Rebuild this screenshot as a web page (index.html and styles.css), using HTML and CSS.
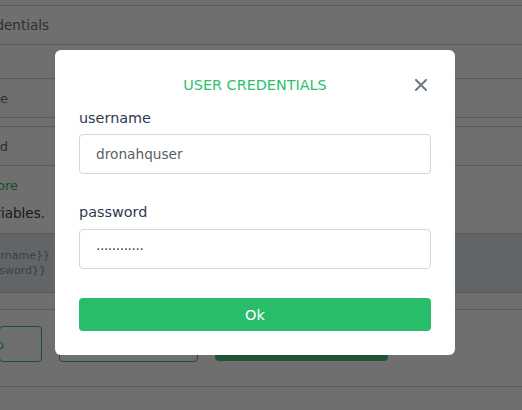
FILE: index.html
```html
<!DOCTYPE html>
<html>
<head>
<meta charset="utf-8">
<link rel="stylesheet" href="styles.css">
</head>
<body>
<div class="page">
  <div class="row row-top"></div>
  <div class="row row-title"><div class="clip clip-title"><span>User Credentials</span></div></div>
  <div class="row row-tabs"></div>
  <div class="row row-field"><div class="clip clip-user"><span>Username</span></div></div>
  <div class="row row-thin"></div>
  <div class="row row-field"><div class="clip clip-pass"><span>Password</span></div></div>
  <div class="info">
    <div class="clip learn"><span>Learn more</span></div>
    <div class="clip vars"><span>Use them as variables.</span></div>
  </div>
  <div class="code">
    <div class="clip clip-code1"><span>{{username}}</span></div>
    <div class="clip clip-code2"><span>{{password}}</span></div>
  </div>
  <div class="row row-gap"></div>
  <div class="actions">
    <div class="btn-bg btn-outline btn-first"><div class="clip clip-btn"><span>Setup</span></div></div>
    <div class="btn-bg btn-outline btn-second"></div>
    <div class="btn-bg btn-solid"></div>
  </div>
  <div class="row row-foot"></div>
</div>

<div class="overlay">
  <div class="modal">
    <div class="modal-head">
      <span class="spacer"></span>
      <h2 class="modal-title">USER CREDENTIALS</h2>
      <button class="close" aria-label="Close">
        <svg width="12" height="12" viewBox="0 0 12 12"><path d="M1 1 L11 11 M11 1 L1 11" stroke="#6c7884" stroke-width="2" stroke-linecap="square" fill="none"/></svg>
      </button>
    </div>
    <label class="field-label field-label-first">username</label>
    <input class="field" type="text" value="dronahquser">
    <label class="field-label field-label-second">password</label>
    <input class="field field-pass" type="text" value="············">
    <button class="ok">Ok</button>
  </div>
</div>
</body>
</html>
```

FILE: styles.css
```css
* { box-sizing: border-box; }
html, body { margin: 0; padding: 0; }
body {
  width: 522px;
  height: 410px;
  overflow: hidden;
  background: #ffffff;
  font-family: "DejaVu Sans", "Liberation Sans", sans-serif;
}
.page {
  width: 522px;
  display: flex;
  flex-direction: column;
  overflow: hidden;
}
.row {
  border-bottom: 1px solid #cfcfcf;
  display: flex;
  align-items: center;
  white-space: nowrap;
}
.row-top { height: 6px; }
.row-title { height: 39px; font-size: 13.5px; color: #6e6e6e; }
.row-tabs { height: 34px; }
.row-field { height: 39px; font-size: 13px; color: #6e6e6e; }
.row-thin { height: 9px; }

/* text whose start lies beyond the left edge: right edge fixed, overflow to the left */
.clip {
  display: flex;
  justify-content: flex-end;
  white-space: nowrap;
}
.clip > span { flex-shrink: 0; }
.clip-title { width: 49px; }
.clip-user { width: 8px; }
.clip-pass { width: 8px; }
.info {
  height: 67px;
  display: flex;
  flex-direction: column;
  padding-top: 12px;
  gap: 12px;
}
.learn { width: 18px; font-size: 13px; color: #3fae60; }
.vars { width: 45px; font-size: 13.5px; color: #3c3c3c; }
.code {
  height: 60px;
  background: #e2e8ee;
  border-top: 1px solid #cfcfcf;
  border-bottom: 1px solid #cfcfcf;
  padding-top: 15px;
  font-size: 11px;
  color: #8a9099;
  display: flex;
  flex-direction: column;
  gap: 2px;
}
.clip-code1 { width: 50px; }
.clip-code2 { width: 46px; }
.row-gap { height: 17px; }
.actions {
  height: 77px;
  display: flex;
  align-items: flex-start;
  padding-top: 16px;
  gap: 17px;
  border-bottom: 1px solid #cfcfcf;
}
.btn-bg {
  height: 36px;
  border-radius: 4px;
  display: flex;
  align-items: center;
  overflow: hidden;
  font-size: 13px;
  color: #3cb86a;
}
.btn-outline { border: 1px solid #3fb56d; }
.btn-first { width: 43px; margin-left: -1px; }
.clip-btn { width: 4px; }
.btn-second { width: 139px; }
.btn-solid { width: 173px; height: 35px; background: #48c47f; }
.row-foot { height: 24px; border-bottom: none; }

.overlay {
  position: fixed;
  inset: 0;
  background: rgba(0, 0, 0, 0.565);
  display: flex;
  align-items: flex-start;
  padding: 50px 0 0 55px;
}
.modal {
  width: 400px;
  height: 305px;
  background: #ffffff;
  border-radius: 6px;
  padding: 25px 24px 24px;
  display: flex;
  flex-direction: column;
}
.modal-head {
  display: grid;
  grid-template-columns: 1fr auto 1fr;
  align-items: center;
  height: 20px;
}
.modal-title {
  margin: 0;
  font-size: 14.4px;
  font-weight: normal;
  color: #2cbf6c;
  line-height: 20px;
  white-space: nowrap;
}
.close {
  justify-self: end;
  margin-right: 4px;
  width: 12px;
  height: 12px;
  padding: 0;
  border: 0;
  background: none;
  display: flex;
}
.field-label {
  display: block;
  font-size: 14.4px;
  line-height: 20px;
  color: #2d3a4e;
}
.field-label-first { margin-top: 13px; }
.field-label-second { margin-top: 28px; }
.field {
  display: block;
  width: 100%;
  height: 40px;
  margin-top: 6px;
  border: 1px solid #d4d4de;
  border-radius: 4px;
  padding: 0 16px;
  font-family: "DejaVu Sans", "Liberation Sans", sans-serif;
  font-size: 13.7px;
  color: #595f66;
  background: #ffffff;
  outline: none;
}
.field-pass { margin-top: 7px; color: #3b4452; letter-spacing: -0.4px; }
.ok {
  margin-top: 29px;
  height: 33px;
  width: 100%;
  border: 0;
  border-radius: 4px;
  background: #29bd6b;
  color: #ffffff;
  font-family: "DejaVu Sans", "Liberation Sans", sans-serif;
  font-size: 14.5px;
  padding: 0;
}
```
